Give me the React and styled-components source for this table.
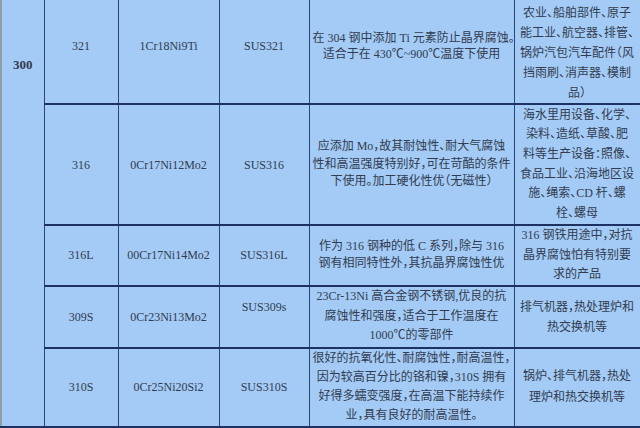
import React from "react";
import styled, { createGlobalStyle } from "styled-components";

const Global = createGlobalStyle`
  html, body { margin: 0; padding: 0; }
  body {
    width: 640px;
    height: 428px;
    overflow: hidden;
    background: #cde0f4;
  }
`;

const Table = styled.table`
  border-collapse: collapse;
  table-layout: fixed;
  width: 639px;
  margin-top: -12px;
  background: #a3cbf5;
  color: #323b50;
  font-family: "Liberation Serif", "Noto Sans CJK SC", serif;
  font-size: 12px;
  font-feature-settings: "halt";
`;

const Row = styled.tr`
  height: ${(p) => p.$h}px;
`;

const Cell = styled.td`
  border-right: 1px solid ${(p) => (p.$last ? "#8a9fb0" : "#2a4674")};
  border-bottom: 2px solid #1d3262;
  border-left: ${(p) => (p.$first ? "2px solid #8a9fab" : "none")};
  padding: ${(p) => p.$pad || "0 3px"};
  text-align: center;
  vertical-align: ${(p) => p.$valign || "middle"};
  line-height: ${(p) => p.$lh || 18}px;
  white-space: nowrap;
  overflow: hidden;
`;

const GroupCell = styled(Cell)`
  font-weight: bold;
  font-size: 13px;
  line-height: 16px;
  vertical-align: top;
  padding-top: 69px;
`;

const Line = styled.span`
  display: block;
`;

const cols = [43, 74, 101, 90, 205, 126];

const rows = [
  {
    h: 116,
    no: "321",
    cn: "1Cr18Ni9Ti",
    jp: "SUS321",
    desc: ["在 304 钢中添加 Ti 元素防止晶界腐蚀。", "适合于在 430℃~900℃温度下使用"],
    descLh: 16,
    use: ["农业、船舶部件、原子", "能工业、航空器、排管、", "锅炉汽包汽车配件（风", "挡雨刷、消声器、模制", "品）"],
    useAlign: "bottom",
    useLh: 20,
  },
  {
    h: 121,
    no: "316",
    cn: "0Cr17Ni12Mo2",
    jp: "SUS316",
    desc: ["应添加 Mo，故其耐蚀性、耐大气腐蚀", "性和高温强度特别好，可在苛酷的条件", "下使用。加工硬化性优（无磁性）"],
    descLh: 17.5,
    use: ["海水里用设备、化学、", "染料、造纸、草酸、肥", "料等生产设备：照像、", "食品工业、沿海地区设", "施、绳索、CD 杆、螺", "栓、螺母"],
    useLh: 19.6,
  },
  {
    h: 60,
    no: "316L",
    cn: "00Cr17Ni14Mo2",
    jp: "SUS316L",
    desc: ["作为 316 钢种的低 C 系列，除与 316", "钢有相同特性外，其抗晶界腐蚀性优"],
    descLh: 17,
    use: ["316 钢铁用途中，对抗", "晶界腐蚀怕有特别要", "求的产品"],
    useLh: 19.5,
  },
  {
    h: 62,
    no: "309S",
    cn: "0Cr23Ni13Mo2",
    jp: "SUS309s",
    jpShift: true,
    desc: ["23Cr-13Ni 高合金钢不锈钢,优良的抗", "腐蚀性和强度，适合于工作温度在", "1000℃的零部件"],
    descLh: 19.5,
    use: ["排气机器，热处理炉和", "热交换机等"],
    useLh: 20,
  },
  {
    h: 79,
    no: "310S",
    cn: "0Cr25Ni20Si2",
    jp: "SUS310S",
    desc: ["很好的抗氧化性、耐腐蚀性，耐高温性，", "因为较高百分比的铬和镍，310S 拥有", "好得多蠕变强度，在高温下能持续作", "业，具有良好的耐高温性。"],
    descLh: 19,
    use: ["锅炉、排气机器，热处", "理炉和热交换机等"],
    useLh: 21,
  },
];

const Lines = ({ items }) => items.map((t, i) => <Line key={i}>{t}</Line>);

export default function App() {
  return (
    <>
      <Global />
      <Table>
        <colgroup>
          {cols.map((w, i) => (
            <col key={i} style={{ width: w }} />
          ))}
        </colgroup>
        <tbody>
          {rows.map((r, i) => (
            <Row key={r.no} $h={r.h}>
              {i === 0 && (
                <GroupCell $first rowSpan={rows.length}>
                  300
                </GroupCell>
              )}
              <Cell>{r.no}</Cell>
              <Cell>{r.cn}</Cell>
              <Cell $pad={r.jpShift ? "0 3px 20px" : undefined}>{r.jp}</Cell>
              <Cell $lh={r.descLh}>
                <Lines items={r.desc} />
              </Cell>
              <Cell $last $lh={r.useLh} $valign={r.useAlign}>
                <Lines items={r.use} />
              </Cell>
            </Row>
          ))}
          <Row $h={20}>
            <Cell $first />
            <Cell />
            <Cell />
            <Cell />
            <Cell />
            <Cell $last />
          </Row>
        </tbody>
      </Table>
    </>
  );
}
